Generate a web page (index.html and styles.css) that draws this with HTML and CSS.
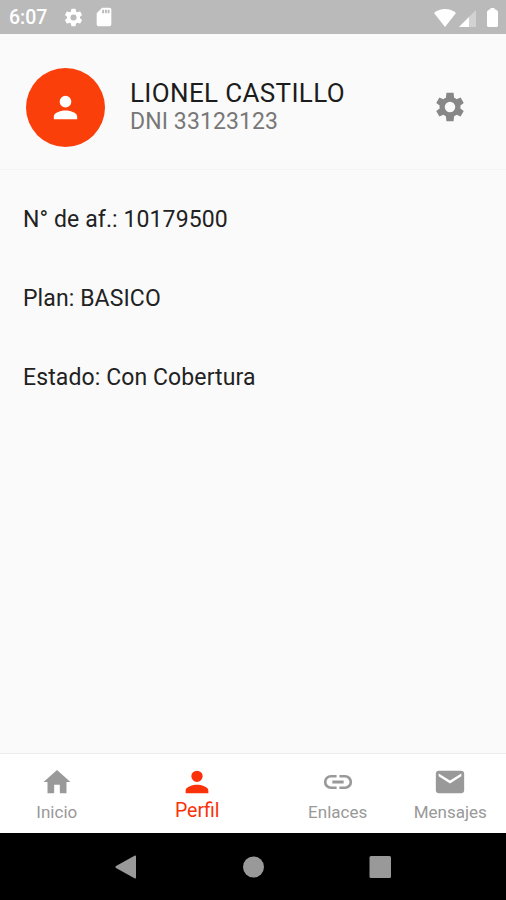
FILE: index.html
```html
<!DOCTYPE html>
<html lang="es">
<head>
    <meta charset="UTF-8">
    <meta name="viewport" content="width=device-width, initial-scale=1.0">
    <title>Perfil</title>
    <link rel="stylesheet" href="styles.css">
</head>
<body>
    <div class="status-bar">
        <span class="time">6:07</span>
        <svg width="21" height="21" viewBox="0 0 24 24"><path d="M19.430 12.980c.04-.32.07-.64.07-.98s-.03-.66-.07-.98l2.110-1.650a.5.5 0 0 0 .12-.64l-2-3.460a.5.5 0 0 0-.61-.22l-2.490 1a7.300 7.300 0 0 0-1.690-.98l-.38-2.650A.49.49 0 0 0 14 2h-4a.49.49 0 0 0-.49.42l-.38 2.650c-.61.25-1.170.59-1.690.98l-2.490-1a.5.5 0 0 0-.61.22l-2 3.460a.49.49 0 0 0 .12.64l2.110 1.650a8 8 0 0 0 0 1.960l-2.110 1.650a.5.5 0 0 0-.12.64l2 3.460c.12.22.39.3.61.22l2.490-1c.52.4 1.080.73 1.690.98l.38 2.650c.03.24.24.42.49.42h4c.25 0 .46-.18.49-.42l.38-2.650a7.300 7.300 0 0 0 1.690-.98l2.490 1c.23.09.49 0 .61-.22l2-3.460a.5.5 0 0 0-.12-.64zM12 15.500a3.500 3.500 0 1 1 0-7 3.500 3.500 0 0 1 0 7z"/></svg>
        <svg class="status-card" width="22" height="22" viewBox="0 0 24 24"><path d="M18 2h-8L4 8v12c0 1.100.9 2 2 2h12c1.100 0 2-.9 2-2V4c0-1.100-.9-2-2-2zm-6 6h-2V4h2zm3 0h-2V4h2zm3 0h-2V4h2z"/></svg>
        <div class="status-right">
            <svg width="22" height="18" viewBox="0 0 22 18"><path d="M0 4C6-1.300 16-1.300 22 4L11 18z"/></svg>
            <svg width="17" height="17" viewBox="0 0 17 17"><path opacity=".35" d="M17 0v17H0z"/><path d="M10 7v10H0z"/></svg>
            <svg class="battery" width="11" height="19" viewBox="0 0 11 19"><path d="M3.500 0h4v1.500H9l2 2V18l-1 1H1l-1-1V3.500l2-2h1.500z"/></svg>
        </div>
    </div>

    <header class="profile">
        <div class="avatar">
            <svg width="35" height="35" viewBox="0 0 24 24"><path d="M12 12a4 4 0 1 0 0-8 4 4 0 0 0 0 8zm0 2c-2.670 0-8 1.340-8 4v2h16v-2c0-2.660-5.330-4-8-4z"/></svg>
        </div>
        <div class="person">
            <div class="name">LIONEL CASTILLO</div>
            <div class="dni">DNI 33123123</div>
        </div>
        <svg class="settings" width="34" height="34" viewBox="0 0 24 24"><path d="M19.300 13.100q.2-1.100 0-2.200l2.400-1.700-2.200-3.900-2.800 1.200a7 7 0 0 0-1.800-1L14.500 2h-5l-.4 3.500a7 7 0 0 0-1.800 1L4.500 5.300 2.300 9.200l2.400 1.700q-.2 1.100 0 2.200l-2.400 1.700 2.200 3.900 2.800-1.200a7 7 0 0 0 1.800 1l.4 3.500h5l.4-3.500a7 7 0 0 0 1.800-1l2.800 1.200 2.200-3.900zM12 15.700a3.700 3.700 0 1 1 0-7.400 3.700 3.700 0 0 1 0 7.400z"/></svg>
    </header>

    <main class="details">
        <p>N° de af.: 10179500</p>
        <p>Plan: BASICO</p>
        <p>Estado: Con Cobertura</p>
    </main>

    <nav class="tabs">
        <a class="tab">
            <svg width="34" height="34" viewBox="0 0 24 24"><path d="M10 20v-6h4v6h4.700v-8h2.800L12 3.500 2.500 12h2.800v8z"/></svg>
            <span>Inicio</span>
        </a>
        <a class="tab active">
            <svg width="34" height="34" viewBox="0 0 24 24"><path d="M12 12a4 4 0 1 0 0-8 4 4 0 0 0 0 8zm0 2c-2.670 0-8 1.340-8 4v2h16v-2c0-2.660-5.330-4-8-4z"/></svg>
            <span>Perfil</span>
        </a>
        <a class="tab">
            <svg width="34" height="34" viewBox="0 0 24 24"><path d="M3.900 12c0-1.710 1.390-3.100 3.100-3.100h4V7H7a5 5 0 0 0 0 10h4v-1.900H7c-1.710 0-3.100-1.390-3.100-3.100zM8 13h8v-2H8zm9-6h-4v1.900h4a3.100 3.100 0 0 1 0 6.200h-4V17h4a5 5 0 0 0 0-10z"/></svg>
            <span>Enlaces</span>
        </a>
        <a class="tab">
            <svg width="34" height="34" viewBox="0 0 24 24"><path d="M20 4H4c-1.100 0-2 .9-2 2v12c0 1.100.9 2 2 2h16c1.100 0 2-.9 2-2V6c0-1.100-.9-2-2-2zm0 4-8 5-8-5V6l8 5 8-5z"/></svg>
            <span>Mensajes</span>
        </a>
    </nav>

    <div class="system-nav">
        <svg width="22" height="24" viewBox="0 0 22 24"><path d="M19.500.7q1.500-.7 1.500 1v20.600q0 1.700-1.500 1L1 13q-1.200-1 0-2z"/></svg>
        <svg width="22" height="22" viewBox="0 0 22 22"><circle cx="11.500" cy="11" r="10.500"/></svg>
        <svg width="22" height="22" viewBox="0 0 22 22"><rect width="21.500" height="22" x=".5" rx="1.500"/></svg>
    </div>
</body>
</html>
```

FILE: styles.css
```css
* {
    box-sizing: border-box;
}

body {
    margin: 0;
    height: 900px;
    display: flex;
    flex-direction: column;
    background: #fafafa;
    font-family: Roboto, sans-serif;
    overflow: hidden;
}

svg {
    display: block;
    fill: currentColor;
    flex: none;
}

.status-bar {
    height: 34px;
    padding: 0 8px 0 9px;
    display: flex;
    align-items: center;
    background: #bababa;
    color: #fff;
}

.time {
    width: 54px;
    padding-top: 1px;
    font-size: 19.5px;
    font-weight: 500;
}

.status-card {
    margin-left: 9px;
}

.status-right {
    margin-left: auto;
    display: flex;
    align-items: flex-end;
    gap: 3px;
}

.battery {
    margin-left: 8px;
}

.profile {
    height: 136px;
    padding: 11px 39px 0 26px;
    display: flex;
    align-items: center;
    border-bottom: 1px solid #f3f3f3;
}

.avatar {
    width: 79px;
    height: 79px;
    display: flex;
    align-items: center;
    justify-content: center;
    border-radius: 50%;
    background: #fb3f0a;
    color: #fff;
}

.person {
    flex: 1;
    margin-left: 25px;
}

.name {
    font-size: 26px;
    line-height: 29px;
    letter-spacing: 0.35px;
    color: #1c1c1c;
}

.dni {
    font-size: 23px;
    line-height: 27px;
    letter-spacing: 0.1px;
    color: #777;
}

.settings {
    color: #878787;
}

.details {
    flex: 1;
    padding: 34px 23px;
    font-size: 23px;
    line-height: 31px;
    letter-spacing: 0.1px;
    color: #222;
}

.details p {
    margin: 0 0 48px;
}

.tabs {
    height: 80px;
    display: flex;
    background: #fff;
    border-top: 1px solid #ececec;
    color: #999;
}

.tab {
    flex: 112;
    display: flex;
    flex-direction: column;
    align-items: center;
    padding: 11px 0 0 1px;
    font-size: 17px;
    line-height: 26px;
}

.tab.active {
    flex: 168;
    font-size: 19.5px;
    line-height: 24px;
    color: #fb3109;
}

.system-nav {
    height: 67px;
    display: flex;
    align-items: center;
    justify-content: center;
    gap: 105px;
    background: #000;
    color: #999;
}
```
